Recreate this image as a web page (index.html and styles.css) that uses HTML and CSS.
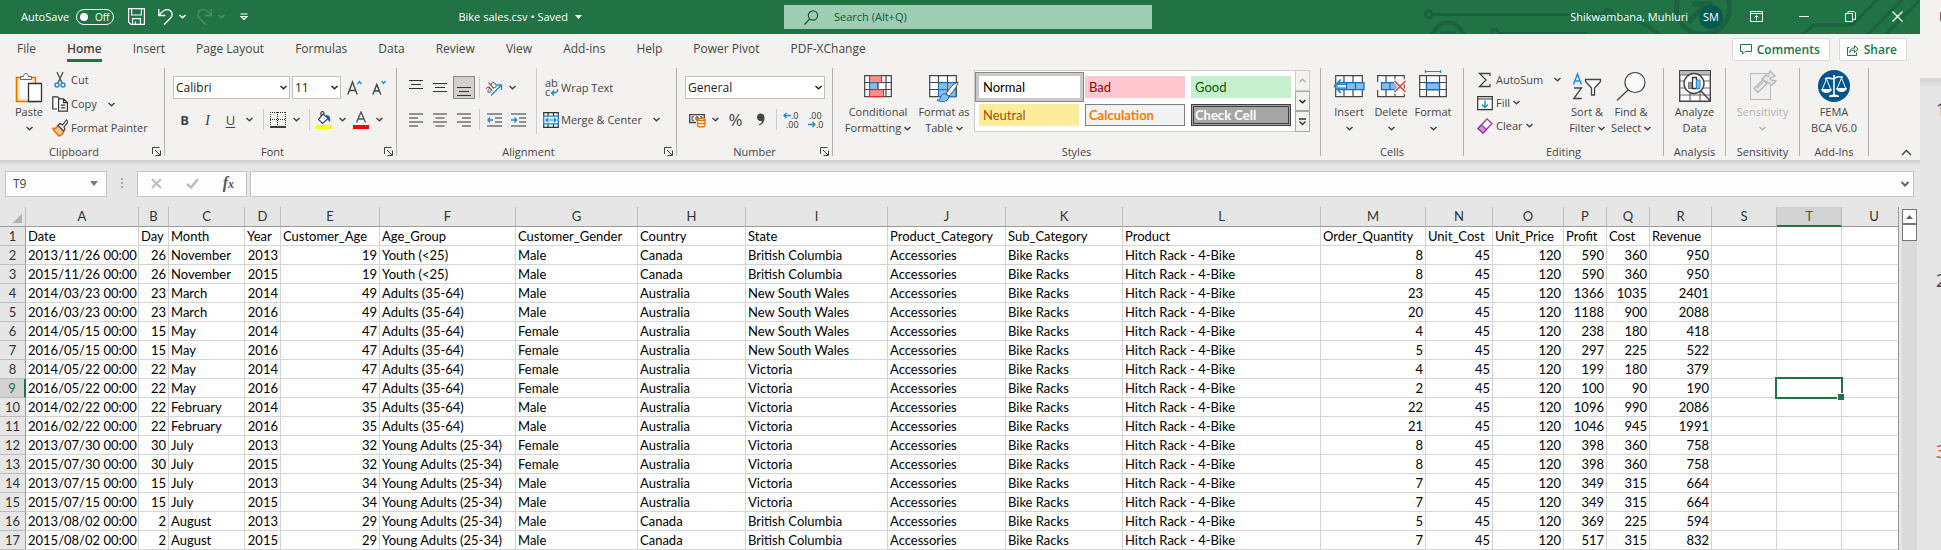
FILE: index.html
```html
<!DOCTYPE html>
<html lang="en">
<head>
<meta charset="utf-8">
<title>Bike sales.csv</title>
<link rel="stylesheet" href="styles.css">
</head>
<body>
<svg class="defs" aria-hidden="true">
  <symbol id="chev" viewBox="0 0 7 5"><path d="M.5 1 3.500 3.700 6.500 1" fill="none" stroke="currentColor" stroke-width="1.500"/></symbol>
  <symbol id="launch" viewBox="0 0 9 9"><path d="M.5 7V.5H7.500M3 3l5 5M8.500 3.500v5h-5" fill="none" stroke="#444"/></symbol>
</svg>
<div class="desktop">
<main class="window">
  <header class="titlebar">
    <svg class="circuit" width="500" height="34" viewBox="0 0 500 34" fill="none" stroke="#1c6140" stroke-width="3" aria-hidden="true">
      <circle cx="9" cy="14.500" r="3.500"/><path d="M13 14.500H182l6 0"/><circle cx="28" cy="38" r="15.500" stroke-width="4"/><path d="M20 33h16"/>
      <circle cx="75" cy="33" r="3.500"/><path d="M79 33.500h88"/><circle cx="188" cy="13" r="3.500"/><path d="M192 15l26 5 22 15"/>
      <circle cx="283" cy="8" r="26.500" stroke-width="5"/><path d="M268 22l20-20M272 4h18v18" stroke-width="5"/>
      <path d="M381 35l13-10h38l26-26M447 35l37-37M465 35l37-37"/>
    </svg>
    <div class="tb-left">
      <label class="autosave"><span>AutoSave</span><button class="toggle" type="button" aria-label="AutoSave off"><i></i>Off</button></label>
      <div class="qat">
        <button type="button" aria-label="Save"><svg width="17" height="17" viewBox="0 0 17 17" fill="none" stroke="#fff" stroke-width="1.200"><path d="M.6.6h15.800v15.800H3L.6 14zM3.600.6v6.400h9.800V.6M4.600 16v-5.400h7.800V16M7.500 16v-2.500"/></svg></button>
        <button type="button" aria-label="Undo"><svg width="15" height="18" viewBox="0 0 15 18" fill="none" stroke="#fff" stroke-width="1.300"><path d="M.8 1v6.500h6.500M1 7.300C4 3.500 7 1.200 10 1.600c4 .6 5.400 5.400 2.600 8.400L6 16.800"/></svg></button>
        <button type="button" aria-label="Undo list"><svg width="7" height="5"><use href="#chev"/></svg></button>
        <button type="button" class="dim" aria-label="Redo"><svg width="15" height="18" viewBox="0 0 15 18" fill="none" stroke="currentColor" stroke-width="1.300"><path d="M14.200 1v6.500H7.700M14 7.300C11 3.500 8 1.200 5 1.600 1 2.200-.4 7 2.400 10L9 16.800"/></svg></button>
        <button type="button" class="dim" aria-label="Redo list"><svg width="7" height="5"><use href="#chev"/></svg></button>
        <button type="button" class="custom" aria-label="Customize toolbar"><svg width="8" height="8" viewBox="0 0 8 8" fill="none" stroke="#fff" stroke-width="1.200"><path d="M.5 1h7M1 3.500h6L4 6.500z"/></svg></button>
      </div>
      <div class="doc">Bike sales.csv • Saved <svg width="7" height="4"><path d="M0 0h7L3.500 4z" fill="#fff"/></svg></div>
    </div>
    <label class="search"><svg width="15" height="15" viewBox="0 0 15 15" fill="none" stroke="#0e5c2f" stroke-width="1.200"><circle cx="9" cy="5.500" r="4.600"/><path d="M5.600 9 .5 14.500"/></svg><input type="text" placeholder="Search (Alt+Q)" aria-label="Search"></label>
    <div class="tb-right">
      <span class="user">Shikwambana, Muhluri</span><span class="avatar">SM</span>
      <button type="button" aria-label="Ribbon display"><svg width="13" height="11" viewBox="0 0 13 11" fill="none" stroke="#fff"><path d="M.5.5h12v10H.5zM.5 2.500h12M6.500 9V4.500M4.500 6.500l2-2 2 2"/></svg></button>
      <button type="button" aria-label="Minimize"><svg width="10" height="11"><path d="M0 5.500h10" stroke="#fff"/></svg></button>
      <button type="button" aria-label="Restore"><svg width="11" height="11" viewBox="0 0 11 11" fill="none" stroke="#fff"><path d="M.5 2.500h7v8h-7zM3 2.500V.5h6l1.500 1.500v6.500h-3"/></svg></button>
      <button type="button" aria-label="Close"><svg width="11" height="11"><path d="M.5.5l10 10M10.500.5l-10 10" stroke="#fff" stroke-width="1.200"/></svg></button>
    </div>
  </header>

  <nav class="tabs">
    <a href="#file">File</a><a href="#home" class="on">Home</a><a href="#insert">Insert</a><a href="#layout">Page Layout</a><a href="#formulas">Formulas</a><a href="#data">Data</a><a href="#review">Review</a><a href="#view">View</a><a href="#addins">Add-ins</a><a href="#help">Help</a><a href="#pivot">Power Pivot</a><a href="#pdf">PDF-XChange</a>
    <div class="actions">
      <button type="button"><svg width="12" height="11" viewBox="0 0 12 11" fill="none" stroke="#217346"><path d="M.5.5h11v7H5l-2.500 2.500V7.500h-2z"/></svg>Comments</button>
      <button type="button"><svg width="12" height="12" viewBox="0 0 12 12" fill="none" stroke="#217346"><path d="M2.500 3.500h-2v8h9v-3M2.500 8.500c.5-3 2-4.500 5-4.500V1.500L11 5 7.500 8.500V6c-2.500 0-4 1-5 2.500z"/></svg>Share</button>
    </div>
  </nav>

  <div class="ribbon">
    <section class="group g-clip">
      <div class="body">
        <button class="big" type="button"><svg width="28" height="34" viewBox="0 0 28 34"><path d="M1.500 7.500h19v24h-19z" fill="#fbe3a8" stroke="#e07000" stroke-width="1.500"/><path d="M4.500 9h13v20h-13z" fill="#fafafa"/><path d="M5.500 9.500V6.500h3c0-4 5-4 5 0h3v3z" fill="#fff" stroke="#666"/><path d="M13.500 13.500h13v18h-13z" fill="#fff" stroke="#333" stroke-width="1.300"/></svg><span>Paste</span><svg class="cv" width="7" height="5"><use href="#chev"/></svg></button>
        <div class="rows">
          <button type="button"><svg width="16" height="18" viewBox="0 0 16 18" fill="none"><path d="M5 1l5 11M11 1L6 12" stroke="#555" stroke-width="1.400"/><circle cx="5" cy="14" r="2" stroke="#1e88d0" stroke-width="1.400"/><circle cx="11" cy="14" r="2" stroke="#1e88d0" stroke-width="1.400"/></svg>Cut</button>
          <button type="button"><svg width="16" height="18" viewBox="0 0 16 18" fill="#fff" stroke="#333" stroke-width="1.200"><path d="M5 14H.8V1.800h4.700L8 4"/><path d="M6.600 3.800h5l3.800 3.700v8.700H6.600zM11.500 4v3.600h3.800M8.800 10.200h4.500M8.800 12.800h4.500"/></svg>Copy<svg class="cv far" width="7" height="5"><use href="#chev"/></svg></button>
          <button type="button"><svg width="16" height="18" viewBox="0 0 16 18"><path d="M1 9.500c3 .5 4-1 5-3l6 5.500c-1 3-3 4.500-5 5C5 15 2 12.500 1 9.500z" fill="#f9c38c" stroke="#e07000" stroke-width="1.500"/><path d="M6 6.500l2-2 2.500 1.500L14.500 1l1.500 2-4 5 1 2-1.500 2z" fill="#eee" stroke="#444" stroke-width="1.200"/></svg>Format Painter</button>
        </div>
      </div>
      <h2>Clipboard</h2><button class="launch" type="button" aria-label="Clipboard settings"><svg width="9" height="9"><use href="#launch"/></svg></button>
    </section>

    <section class="group g-font">
      <div class="body two">
        <div class="row">
          <span class="sel s-font"><select aria-label="Font"><option>Calibri</option></select><svg width="7" height="5"><use href="#chev"/></svg></span>
          <span class="sel s-size"><select aria-label="Font size"><option>11</option></select><svg width="7" height="5"><use href="#chev"/></svg></span>
          <button class="ic" type="button" aria-label="Increase font size"><svg width="16" height="18" viewBox="0 0 16 18" fill="none"><path d="M.8 15.500L5.500 3l4.700 12.500M2.300 11.500h6.400" stroke="#444" stroke-width="1.400"/><path d="M10.500 5l2-2.500 2 2.500" stroke="#1e88d0" stroke-width="1.300"/></svg></button>
          <button class="ic" type="button" aria-label="Decrease font size"><svg width="16" height="18" viewBox="0 0 16 18" fill="none"><path d="M1.800 15.500L5.800 5.500l4 10M3.300 12h5" stroke="#444" stroke-width="1.400"/><path d="M10.500 2l2 2.500 2-2.500" stroke="#1e88d0" stroke-width="1.300"/></svg></button>
        </div>
        <div class="row tight">
          <button class="ic ltr b" type="button">B</button><button class="ic ltr i" type="button">I</button><button class="ic ltr u" type="button">U</button><button class="dd" type="button" aria-label="Underline styles"><svg width="7" height="5"><use href="#chev"/></svg></button>
          <i class="sep"></i>
          <button class="ic" type="button" aria-label="Borders"><svg width="16" height="16" viewBox="0 0 16 16" fill="none" stroke="#333"><path d="M.5 0v14M15.500 0v14M7.500 0v14M0 .5h16M0 7.500h16" stroke-dasharray="1 1"/><path d="M0 15h16" stroke="#000" stroke-width="1.500"/></svg></button><button class="dd" type="button" aria-label="Border styles"><svg width="7" height="5"><use href="#chev"/></svg></button>
          <i class="sep"></i>
          <button class="ic" type="button" aria-label="Fill color"><svg width="16" height="18" viewBox="0 0 16 18"><path d="M7 3l5 4.500-5.500 5L2.500 8.500zM5 5V1.500c1-1.500 3-1 3 .5v2" fill="#fff" stroke="#444" stroke-width="1.200"/><path d="M10 4c4 0 5 3 4 7-2-1-2-3-4-5z" fill="#1f5fa8"/><path d="M0 14h16v4H0z" fill="#ff0"/></svg></button><button class="dd" type="button" aria-label="Fill colors"><svg width="7" height="5"><use href="#chev"/></svg></button>
          <button class="ic" type="button" aria-label="Font color"><svg width="16" height="18" viewBox="0 0 16 18"><path d="M3.500 11.500L8 1l4.500 10.500M5 8h6" fill="none" stroke="#555" stroke-width="1.400"/><path d="M0 14h16v4H0z" fill="#f00"/></svg></button><button class="dd" type="button" aria-label="Font colors"><svg width="7" height="5"><use href="#chev"/></svg></button>
        </div>
      </div>
      <h2>Font</h2><button class="launch" type="button" aria-label="Font settings"><svg width="9" height="9"><use href="#launch"/></svg></button>
    </section>

    <section class="group g-align">
      <div class="body">
        <div class="two">
          <div class="row">
            <button class="ic" type="button" aria-label="Top align"><svg width="14" height="18"><path d="M0 1.500h14M2 5.500h10M0 9.500h14" stroke="#333" stroke-width="1.200"/></svg></button>
            <button class="ic" type="button" aria-label="Middle align"><svg width="14" height="18"><path d="M0 4.500h14M2 8.500h10M0 12.500h14" stroke="#333" stroke-width="1.200"/></svg></button>
            <button class="ic act" type="button" aria-label="Bottom align"><svg width="14" height="18"><path d="M0 8.500h14M2 12.500h10M0 16.500h14" stroke="#333" stroke-width="1.200"/></svg></button>
            <i class="sep"></i>
            <button class="ic" type="button" aria-label="Orientation"><svg class="spill" width="18" height="18" viewBox="0 0 18 18"><text x="2" y="13" font-size="11" fill="#444" transform="rotate(-42 5 12)">ab</text><path d="M6 16.500L16 6.500M11.500 6h5v5" fill="none" stroke="#1e88d0" stroke-width="1.300"/></svg></button><button class="dd" type="button" aria-label="Orientations"><svg width="7" height="5"><use href="#chev"/></svg></button>
          </div>
          <div class="row">
            <button class="ic" type="button" aria-label="Align left"><svg width="14" height="14"><path d="M0 1h14M0 5h9M0 9h14M0 13h9" stroke="#333" stroke-width="1.200"/></svg></button>
            <button class="ic" type="button" aria-label="Center"><svg width="14" height="14"><path d="M0 1h14M2.500 5h9M0 9h14M2.500 13h9" stroke="#333" stroke-width="1.200"/></svg></button>
            <button class="ic" type="button" aria-label="Align right"><svg width="14" height="14"><path d="M0 1h14M5 5h9M0 9h14M5 13h9" stroke="#333" stroke-width="1.200"/></svg></button>
            <i class="sep"></i>
            <button class="ic" type="button" aria-label="Decrease indent"><svg width="15" height="14" fill="none"><path d="M0 1h15M8 5h7M8 9h7M0 13h15" stroke="#333" stroke-width="1.200"/><path d="M6 7H.8M3 4.500L.8 7 3 9.500" stroke="#1e88d0" stroke-width="1.300"/></svg></button>
            <button class="ic" type="button" aria-label="Increase indent"><svg width="15" height="14" fill="none"><path d="M0 1h15M8 5h7M8 9h7M0 13h15" stroke="#333" stroke-width="1.200"/><path d="M0 7h5.500M3.500 4.500L5.700 7 3.500 9.500" stroke="#1e88d0" stroke-width="1.300"/></svg></button>
          </div>
        </div>
        <div class="two wrapcol">
          <div class="row"><button class="txt" type="button"><svg class="spill" width="16" height="18" viewBox="0 0 16 18"><text x="2" y="8" font-size="11" fill="#444">ab</text><text x="2" y="17" font-size="11" fill="#444">c</text><path d="M14.500 10c1 3-1.500 4-5.500 4M11 11.500L8.500 14l2.500 2.500" fill="none" stroke="#1e88d0" stroke-width="1.400"/></svg>Wrap Text</button></div>
          <div class="row"><button class="txt" type="button"><svg width="16" height="16" viewBox="0 0 16 16" fill="none"><path d="M.7.7h14.600v14.600H.7zM5 1v3M10.500 1v3M5 12v3M10.500 12v3" stroke="#333" stroke-width="1.200"/><path d="M.7 4.200h14.600v7.600H.7z" fill="#e5f2fc" stroke="#1e88d0" stroke-width="1.300"/><path d="M3 8h10M5 6L3 8l2 2M11 6l2 2-2 2" stroke="#1e88d0" stroke-width="1.200"/></svg>Merge &amp; Center<svg class="cv" width="7" height="5"><use href="#chev"/></svg></button></div>
        </div>
      </div>
      <h2>Alignment</h2><button class="launch" type="button" aria-label="Alignment settings"><svg width="9" height="9"><use href="#launch"/></svg></button>
    </section>

    <section class="group g-num">
      <div class="body two">
        <div class="row"><span class="sel s-num"><select aria-label="Number format"><option>General</option></select><svg width="7" height="5"><use href="#chev"/></svg></span></div>
        <div class="row">
          <button class="ic" type="button" aria-label="Accounting format"><svg width="17" height="16" viewBox="0 0 17 16" fill="none"><path d="M7 10.500H.7V2.700h14.600V6" stroke="#444" stroke-width="1.300"/><path d="M5 4.800H3v3.500h2M9 8H7V4.800h2zM11 4.800h2V6" stroke="#444"/><path d="M8.500 7.500c0-1.500 7.500-1.500 7.500 0v6c0 1.800-7.500 1.800-7.500 0zM8.500 7.500c0 1.500 7.500 1.500 7.500 0M8.500 10.500c0 1.500 7.500 1.500 7.500 0" fill="#fff" stroke="#e07000" stroke-width="1.300"/></svg></button><button class="dd" type="button" aria-label="Accounting formats"><svg width="7" height="5"><use href="#chev"/></svg></button>
          <button class="ic pct" type="button">%</button>
          <button class="ic" type="button" aria-label="Comma style"><svg width="10" height="16" viewBox="0 0 10 16"><path d="M4.500 1.500c3 0 4 2 4 4.500 0 4-2 6.500-5.500 7.500v-1.200c2-.8 3-2 3-3.600C3 9.500 1 8 1 5.200c0-2 1.500-3.700 3.500-3.700z" fill="#444"/></svg></button>
          <i class="sep"></i>
          <button class="ic" type="button" aria-label="Increase decimal"><svg class="spill" width="17" height="18" viewBox="0 0 17 18"><text x="8" y="8" font-size="9" fill="#333">.0</text><text x="3" y="17" font-size="9" fill="#333">.00</text><path d="M8 4.500H1M3.500 2L1 4.500 3.500 7" fill="none" stroke="#1e88d0" stroke-width="1.300"/></svg></button>
          <button class="ic" type="button" aria-label="Decrease decimal"><svg class="spill" width="17" height="18" viewBox="0 0 17 18"><text x="2" y="8" font-size="9" fill="#333">.00</text><text x="9" y="17" font-size="9" fill="#333">.0</text><path d="M1 13.500h7M5.500 11L8 13.500 5.500 16" fill="none" stroke="#1e88d0" stroke-width="1.300"/></svg></button>
        </div>
      </div>
      <h2>Number</h2><button class="launch" type="button" aria-label="Number settings"><svg width="9" height="9"><use href="#launch"/></svg></button>
    </section>

    <section class="group g-styles">
      <div class="body">
        <button class="big w66" type="button"><svg width="28" height="34" viewBox="0 0 28 34" fill="none"><path d="M.7 5.700h26.600v21H.7zM6 5v22M22 5v22M0 12.500h28M0 19.500h28M14 5v22" fill="#fff" stroke="#444" stroke-width="1.200"/><path d="M5.600 5.700h12v7h-12z" fill="#ff8f8f" stroke="#d22"/><path d="M5.600 12.700h8v7h-8z" fill="#84bdec" stroke="#1469b8"/><path d="M5.600 19.700h14v7h-14z" fill="#ff8f8f" stroke="#d22"/></svg><span>Conditional</span><span>Formatting <svg width="7" height="5"><use href="#chev"/></svg></span></button>
        <button class="big w66" type="button"><svg width="30" height="34" viewBox="0 0 30 34" fill="none"><path d="M.7 5.700h26.600v21H.7zM9.500 5v22M18.500 5v22M0 12.500h28M0 19.500h28" fill="#fff" stroke="#444" stroke-width="1.200"/><path d="M9.500 12.700h17.500v14H9.500zM18.500 12v15M9 19.700h18" fill="#84bdec" stroke="#1469b8"/><path d="M29 12c-5 2-9 7-12 12l3 2c4-4 8-9 9-14z" fill="#fff" stroke="#444"/><path d="M17 24c-4-1-5 2-5.500 4-1 2-2.500 2-3.500 2 4 3 12 2 12-4z" fill="#84bdec" stroke="#1469b8"/></svg><span>Format as</span><span>Table <svg width="7" height="5"><use href="#chev"/></svg></span></button>
        <div class="gallery">
          <div class="swatches">
            <button type="button" class="sw normal">Normal</button><button type="button" class="sw bad">Bad</button><button type="button" class="sw good">Good</button>
            <button type="button" class="sw neutral">Neutral</button><button type="button" class="sw calc">Calculation</button><button type="button" class="sw check">Check Cell</button>
          </div>
          <div class="gscroll">
            <button type="button" class="off" aria-label="Scroll up"><svg width="7" height="5" class="flip"><use href="#chev"/></svg></button>
            <button type="button" aria-label="Scroll down"><svg width="7" height="5"><use href="#chev"/></svg></button>
            <button type="button" aria-label="More styles"><svg width="7" height="8" viewBox="0 0 7 8" fill="none" stroke="#333" stroke-width="1.300"><path d="M0 1h7M.5 3.500l3 3 3-3"/></svg></button>
          </div>
        </div>
      </div>
      <h2>Styles</h2>
    </section>

    <section class="group g-cells">
      <div class="body">
        <button class="big w42" type="button"><svg width="34" height="34" viewBox="0 0 34 34" fill="none"><path d="M3.700 5.700h26.600v21H3.700zM12 5v22M21 5v22" fill="#fff" stroke="#444" stroke-width="1.200"/><path d="M7 12.700h25v7H7zM14.500 13v7M23.500 13v7" fill="#84bdec" stroke="#1469b8" stroke-width="1.200"/><path d="M14 14.500H5l4-5M14 18H5l4 5M2 16.200L8.500 9.500M2 16.200L8.500 23M2 16.200h12" stroke="#1e88d0" stroke-width="1.200"/><path d="M6 16.200h8" stroke="#fff" stroke-width="2"/></svg><span>Insert</span><svg class="cv" width="7" height="5"><use href="#chev"/></svg></button>
        <button class="big w42" type="button"><svg width="34" height="34" viewBox="0 0 34 34" fill="none"><path d="M3.700 5.700h26.600v21H3.700zM12 5v22M21 5v22" fill="#fff" stroke="#444" stroke-width="1.200"/><path d="M1 12h22v8H1z" fill="#f3f2f1"/><path d="M7.500 12.700h13l4 3.500-4 3.500h-13zM16 13v7" fill="#84bdec" stroke="#1469b8" stroke-width="1.200"/><path d="M20 10l12 13M32 10L20 23" stroke="#f3f2f1" stroke-width="4"/><path d="M20.500 11l11 11M31.500 11l-11 11" stroke="#e33" stroke-width="1.300"/></svg><span>Delete</span><svg class="cv" width="7" height="5"><use href="#chev"/></svg></button>
        <button class="big w42" type="button"><svg width="34" height="34" viewBox="0 0 34 34" fill="none"><path d="M3.700 5.700h26.600v21H3.700zM10.500 5v22M23.500 5v22M3 12.500h28M3 19.500h28" fill="#fff" stroke="#444" stroke-width="1.200"/><path d="M10.500 12.700h13v7h-13z" fill="#84bdec" stroke="#1469b8" stroke-width="1.400"/><path d="M9.500 1.500h15M9.500 0v3M24.500 0v3" stroke="#1e88d0" stroke-width="1.200"/></svg><span>Format</span><svg class="cv" width="7" height="5"><use href="#chev"/></svg></button>
      </div>
      <h2>Cells</h2>
    </section>

    <section class="group g-edit">
      <div class="body">
        <div class="rows">
          <button type="button"><svg width="16" height="16" viewBox="0 0 16 16" fill="none" stroke="#444" stroke-width="1.300"><path d="M13 4V1.500H2.500L9 8l-6.500 6.500H13V12"/></svg>AutoSum<svg class="cv far" width="7" height="5"><use href="#chev"/></svg></button>
          <button type="button"><svg width="16" height="16" viewBox="0 0 16 16" fill="none"><path d="M.7 1.700h14.600v13H.7zM.7 4h14.600" fill="#fff" stroke="#333" stroke-width="1.200"/><path d="M8 5.500v7M5 9.500l3 3 3-3" stroke="#1e88d0" stroke-width="1.400"/></svg>Fill<svg class="cv" width="7" height="5"><use href="#chev"/></svg></button>
          <button type="button"><svg width="16" height="16" viewBox="0 0 16 16"><path d="M10 1l5 4.500-9 9.500L1 10.500z" fill="#fff" stroke="#993bab" stroke-width="1.300"/><path d="M4.500 7l5 4.500L6 15 1 10.500z" fill="#d592d8" stroke="#993bab" stroke-width="1.300"/></svg>Clear<svg class="cv" width="7" height="5"><use href="#chev"/></svg></button>
        </div>
        <button class="big w44" type="button"><svg width="30" height="34" viewBox="0 0 30 34" fill="none"><path d="M1.500 14.500L5.500 4l4 10.500M3 11h5" stroke="#1e88d0" stroke-width="1.400"/><path d="M2 18h7.500L1.800 28.500h8" stroke="#444" stroke-width="1.300"/><path d="M13.500 9.500h15v2l-6 6.500v7h-3v-7l-6-6.500z" fill="#fff" stroke="#444" stroke-width="1.300"/></svg><span>Sort &amp;</span><span>Filter <svg width="7" height="5"><use href="#chev"/></svg></span></button>
        <button class="big w44" type="button"><svg width="30" height="34" viewBox="0 0 30 34" fill="none"><circle cx="19" cy="12.500" r="10" fill="#fafafa" stroke="#444" stroke-width="1.200"/><path d="M12 20L1 30.500" stroke="#444" stroke-width="1.300"/></svg><span>Find &amp;</span><span>Select <svg width="7" height="5"><use href="#chev"/></svg></span></button>
      </div>
      <h2>Editing</h2>
    </section>

    <section class="group g-one">
      <div class="body"><button class="big" type="button"><svg width="32" height="34" viewBox="0 0 32 34" fill="none"><path d="M.7.7h30.600v30.600H.7z" fill="#fff" stroke="#444" stroke-width="1.400"/><path d="M1 1h30v4H1z" fill="#bbb"/><path d="M1 5h30M1 11h30M1 18h30M1 25h30M11 18v13M21 18v13" stroke="#666" stroke-width="1.200"/><circle cx="15" cy="13.500" r="10" fill="#fff" stroke="#444" stroke-width="1.400"/><path d="M22 21l9 9.500" stroke="#444" stroke-width="1.500"/><path d="M9.500 12.500h3.500v6H9.500z" fill="#999" stroke="#777"/><path d="M13.500 7.500h4v11h-4z" fill="#fff" stroke="#333" stroke-width="1.300"/><path d="M17.500 10h3.500v8.500h-3.500z" fill="#84bdec" stroke="#1e88d0"/></svg><span>Analyze</span><span>Data</span></button></div>
      <h2>Analysis</h2>
    </section>
    <section class="group g-sens">
      <div class="body"><button class="big off" type="button" disabled><svg width="28" height="34" viewBox="0 0 28 34" fill="#e8e8e8" stroke="#b8b8b8"><path d="M1.500 3.500h20v26h-20z" fill="#f0f0f0"/><path d="M5 18.500l9-9 4 4-9 9zM8 18l6-6" stroke-width="1.300"/><path d="M13 9l4-4 2 1 2-5 5 5-5 2 1 2 5 1-4 4z" stroke-width="1.400"/></svg><span>Sensitivity</span><svg class="cv" width="7" height="5"><use href="#chev"/></svg></button></div>
      <h2>Sensitivity</h2>
    </section>
    <section class="group g-add">
      <div class="body"><button class="big" type="button"><svg width="32" height="34" viewBox="0 0 32 34" fill="none" stroke="#fff"><circle cx="16" cy="16" r="16" fill="#00558c" stroke="none"/><path d="M16 5v20M7 9c4-3 6 1 9-.5s5-3 9-1" stroke-width="1.600"/><path d="M11 26.500c1-2 9-2 10 0z" fill="#fff"/><path d="M8.500 9L4 20M8.500 9l4.500 11M23.500 8L19 19M23.500 8L28 19"/><path d="M3.500 19.500h10c-1 4-9 4-10 0zM18.500 18.500h10c-1 4-9 4-10 0z" fill="#fff"/></svg><span>FEMA</span><span>BCA V6.0</span></button></div>
      <h2>Add-Ins</h2>
    </section>
    <button class="collapse" type="button" aria-label="Collapse ribbon"><svg width="11" height="7"><path d="M1 6l4.500-4.500L10 6" fill="none" stroke="#444" stroke-width="1.400"/></svg></button>
  </div>

  <div class="fbar">
    <label class="namebox"><input type="text" value="T9" aria-label="Name box"><svg width="8" height="5"><path d="M0 0h8L4 5z" fill="#777"/></svg></label>
    <span class="grip"></span>
    <div class="fx">
      <button type="button" aria-label="Cancel"><svg width="11" height="11"><path d="M1 1l9 9M10 1l-9 9" stroke="#bbb" stroke-width="2"/></svg></button>
      <button type="button" aria-label="Enter"><svg width="13" height="11" fill="none"><path d="M1 6l4 3.500L12 1" stroke="#bbb" stroke-width="2.400"/></svg></button>
      <button type="button" class="fn">f<sub>x</sub></button>
    </div>
    <label class="formula"><input type="text" aria-label="Formula"><svg width="8" height="6" viewBox="0 0 8 6"><path d="M.5 1L4 4.500 7.500 1" fill="none" stroke="#666" stroke-width="2"/></svg></label>
  </div>

  <div class="sheet">
    <div class="viewport"><table class="grid" id="grid"></table></div>
    <div class="scroll"><button type="button" aria-label="Scroll up"><svg width="7" height="4"><path d="M0 4h7L3.500 0z" fill="#666"/></svg></button><span class="thumb"></span></div>
  </div>
</main>
<aside class="behind">
  <div class="b-top"><span>I</span></div>
  <ol><li>1</li><li>2</li><li class="cur">3</li></ol>
</aside>
</div>
<script src="app.js"></script>
</body>
</html>
```
FILE: styles.css
```css
* { box-sizing: border-box; }
body { margin: 0; overflow: hidden; background: #e6e6e6; font: 12px/16px "Open Sans", "Noto Sans", sans-serif; color: #444; }
button, input, select { font: inherit; color: inherit; margin: 0; padding: 0; border: 0; background: none; }
button { white-space: nowrap; }
input { min-width: 0; outline: 0; }
svg { flex: none; }
.spill { overflow: visible; }
.defs { display: none; }
.desktop { display: flex; height: 100vh; overflow: hidden; }
.window { flex: 1; min-width: 0; display: flex; flex-direction: column; }

/* title bar */
.titlebar { position: relative; display: grid; grid-template-columns: 784fr 368fr 768fr; align-items: center; height: 34px; background: #217346; color: #fff; overflow: hidden; font-size: 11px; }
.circuit { position: absolute; right: 0; top: 0; }
.tb-left { display: flex; align-items: center; padding: 0 202px 1px 21px; }
.autosave { display: flex; align-items: center; gap: 7px; }
.toggle { display: flex; align-items: center; gap: 7px; width: 38px; height: 16px; padding: 0 3px; border: 1px solid #fff; border-radius: 8px; font-size: 10px; }
.toggle i { width: 8px; height: 8px; border-radius: 50%; background: #fff; }
.qat { display: flex; align-items: center; gap: 6px; margin-left: 14px; }
.qat button { display: flex; }
.qat button:nth-child(2) { margin-left: 7px; }
.qat .dim { color: #4d9169; }
.qat .dim:nth-child(4) { margin-left: 5px; }
.qat .custom { margin-left: 9px; }
.doc { display: flex; align-items: center; gap: 7px; margin-left: auto; white-space: nowrap; }
.search { position: relative; display: flex; align-items: center; gap: 15px; height: 24px; padding-left: 20px; background: #9fcdb3; color: #0e5c2f; }
.search input { flex: 1; }
.search input::placeholder { color: #0e5c2f; opacity: 1; }
.tb-right { position: relative; display: flex; align-items: center; justify-content: flex-end; gap: 36px; padding-right: 17px; }
.tb-right button { display: flex; padding-bottom: 2px; }
.user { margin-right: -25px; }
.avatar { width: 24px; height: 24px; border-radius: 50%; background: #035b52; text-align: center; line-height: 24px; margin-right: -9px; }

/* tabs */
.tabs { display: flex; gap: 31px; height: 34px; padding: 5px 13px 0 17px; background: #f3f2f1; line-height: 20px; }
.tabs a { height: 23px; color: #444; text-decoration: none; white-space: nowrap; }
.tabs .on { font-weight: 600; border-bottom: 3px solid #217346; }
.actions { display: flex; gap: 9px; margin-left: auto; margin-top: -1px; height: 23px; }
.actions button { display: flex; align-items: center; gap: 5px; padding: 0 9px 0 7px; background: #fff; border: 1px solid #dcdad8; border-radius: 2px; color: #217346; font-weight: 600; }

/* ribbon */
.ribbon { position: relative; display: flex; height: 92px; padding-bottom: 4px; background: #f3f2f1; font-size: 11px; }
.group { position: relative; flex: none; display: flex; flex-direction: column; border-right: 1px solid #b3b1af; }
.group h2 { margin: 0; height: 12px; font: inherit; text-align: center; }
.g-clip h2, .g-align h2, .g-font h2 { padding-right: 16px; }
.body { flex: 1; display: flex; min-height: 0; }
.launch { position: absolute; right: 3px; bottom: 0; display: flex; }
.g-clip { width: 165px; } .g-font { width: 232px; } .g-align { width: 280px; } .g-num { width: 156px; } .g-styles { width: 488px; }
.g-cells { width: 143px; } .g-edit { width: 200px; } .g-one { width: 62px; } .g-sens { width: 74px; } .g-add { width: 69px; }
.g-clip .body { padding-left: 7px; gap: 1px; }
.g-font .body { padding-left: 8px; }
.g-align .body { padding-left: 7px; }
.g-num .body { padding-left: 8px; }
.g-styles .body { padding-left: 12px; }
.g-cells .body { padding-left: 7px; }
.g-edit .body { padding-left: 13px; }
.g-one .body, .g-sens .body, .g-add .body { justify-content: center; }

.big { display: flex; flex-direction: column; align-items: center; padding-top: 2px; min-width: 44px; line-height: 16px; }
.big span { height: 16px; }
.big span svg { vertical-align: 1px; }
.big .cv { margin-top: 6px; }
.big.w66 { width: 66px; } .big.w42 { min-width: 42px; } .big.w44 { width: 44px; }
.big.off { color: #b4b2b0; }
.rows { display: flex; flex-direction: column; }
.rows button { display: flex; align-items: center; gap: 3px; height: 24px; }
.g-edit .rows { width: 88px; }
.g-edit .rows button { height: 23px; }
.rows .far { margin-left: 8px; }
.two { display: flex; flex-direction: column; gap: 9px; padding-top: 8px; }
.row { display: flex; align-items: center; height: 23px; }
.ic { display: flex; align-items: center; justify-content: center; width: 24px; height: 23px; }
.ic.act { width: 22px; margin: 0 1px; background: #d2d0ce; border: 1px solid #8a8886; }
.dd { display: flex; justify-content: center; width: 13px; }
.sep { width: 1px; height: 21px; margin: 0 2px 0 3px; background: #cfcdcb; }
.g-font .sep { margin: 0 2px 0 6px; }
.ic.ltr { width: 23px; font-size: 13px; }
.ltr + .dd { width: 15px; }
.b { font-weight: 700; } .ic.i { font-family: "Liberation Serif", serif; font-style: italic; font-size: 15px; } .u { text-decoration: underline; text-underline-offset: 2px; }
.ic.pct { font-size: 17px; width: 27px; }
.sel { position: relative; display: flex; align-items: center; height: 23px; background: #fff; border: 1px solid #c3c1bf; color: #222; font-size: 12px; }
.sel select { appearance: none; width: 100%; height: 21px; padding-left: 2px; }
.sel svg { position: absolute; right: 2px; pointer-events: none; }
.s-font { width: 117px; } .s-size { width: 49px; margin: 0 2px 0 2px; } .s-num { width: 140px; }
.wrapcol { margin-left: 6px; padding-left: 6px; border-left: 1px solid #cfcdcb; height: 66px; }
.txt { display: flex; align-items: center; gap: 2px; }
.txt .cv { margin-left: 9px; }

.gallery { display: flex; height: 62px; margin: 2px 0 0 -3px; }
.swatches { display: grid; grid-template-columns: repeat(3, 100px); grid-auto-rows: 22px; gap: 6px; width: 321px; padding: 5px 0 0 4px; background: #fff; border: 1px solid #cfcdcb; border-right: 0; }
.sw { text-align: left; padding-left: 4px; font: 13px/20px Lato, sans-serif; }
.normal { color: #000; outline: 3px solid #cbc9c6; box-shadow: 0 0 0 4px #8a8886; margin-right: -1px; }
.bad { background: #ffc7ce; color: #9c0006; } .good { background: #c6efce; color: #006100; } .neutral { background: #ffeb9c; color: #9c5700; }
.calc { background: #f2f2f2; color: #fa7d00; border: 1px solid #7f7f7f; font-weight: 700; padding-left: 3px; }
.check { background: #a5a5a5; color: #fff; border: 3px double #3f3f3f; font-weight: 700; padding-left: 1px; line-height: 16px; }
.gscroll { display: flex; flex-direction: column; width: 15px; }
.gscroll button { flex: 1; display: flex; align-items: center; justify-content: center; border: 1px solid #aaa8a6; color: #222; }
.gscroll .off { color: #b0aeac; border-color: #cfcdcb; }
.flip { transform: rotate(180deg); }
.collapse { display: flex; align-self: flex-end; margin-left: auto; padding: 0 8px 0 0; }

/* formula bar */
.fbar { display: flex; align-items: center; height: 47px; padding: 0 6px 0 5px; background: linear-gradient(#cfcfcf, #e6e6e6 6px); }
.namebox, .fx, .formula { display: flex; align-items: center; height: 26px; background: #fdfdfd; border: 1px solid #c6c6c6; }
.namebox { width: 102px; padding: 0 8px 0 7px; }
.namebox input { flex: 1; }
.grip { width: 2px; height: 11px; margin: 0 14px 0 14px; background: repeating-linear-gradient(#aaa 0 2px, transparent 2px 4px); }
.fx { width: 110px; justify-content: space-between; padding: 0 12px 0 13px; }
.fx button { display: flex; align-items: center; }
.fx .fn { font: italic 700 16px/16px "Liberation Serif", serif; color: #555; align-items: baseline; }
.fn sub { font-size: 12px; vertical-align: baseline; }
.formula { flex: 1; margin-left: 3px; padding-right: 4px; }
.formula input { flex: 1; }

/* sheet */
.sheet { flex: 1; min-height: 0; display: flex; }
.viewport { flex: 1; min-width: 0; overflow: hidden; border-right: 1px solid #9b9b9b; }
.grid { width: 1px; table-layout: fixed; border-collapse: separate; border-spacing: 0; background: #fff; color: #000; font: 13px/18px Lato, sans-serif; }
.grid th, .grid td { height: 19px; padding: 0 2px; border: solid #d4d4d4; border-width: 0 1px 1px 0; white-space: nowrap; overflow: hidden; font-weight: 400; }
.grid td.n { text-align: right; }
.grid th { background: #e6e6e6; color: #333; text-align: center; border-color: #bdbdbd; }
.grid thead th { height: 20px; line-height: 19px; border-bottom-color: #9b9b9b; }
.grid tbody th { border-right-color: #9b9b9b; padding: 0; }
.grid thead th.cur { background: #d2d2d2; color: #217346; border-bottom: 2px solid #217346; line-height: 18px; }
.grid tbody th.cur { background: #d2d2d2; color: #217346; border-right: 2px solid #217346; }
.grid .corner { background: linear-gradient(135deg, #e6e6e6 0 55%, #b4b4b4 55%) no-repeat 11px 5px / 11px 11px, #e6e6e6; }
.grid td.sel-cell { position: relative; overflow: visible; }
.sel-cell::before { content: ""; position: absolute; inset: -2px; border: 2px solid #217346; }
.sel-cell::after { content: ""; position: absolute; right: -3px; bottom: -3px; width: 6px; height: 6px; background: #217346; border: solid #fff; border-width: 1px 0 0 1px; }
.scroll { display: flex; flex-direction: column; width: 15px; margin: 2px 3px 0; background: #dadada; }
.scroll button { display: flex; align-items: center; justify-content: center; height: 15px; background: #fff; border: 1px solid #777; }
.thumb { height: 17px; background: #fff; border: 1px solid #777; }

/* window behind */
.behind { width: 21px; overflow: hidden; background: linear-gradient(#d4d4d4, #e6e6e6 10px) 0 78px no-repeat, #e6e6e6; }
.b-top { height: 78px; padding: 9px 0 0 19px; background: #f3f2f1; }
.behind ol { margin: 0; padding: 18px 0 0 16px; list-style: none; font-size: 18px; line-height: 26px; }
.behind li { height: 171px; }
.behind .cur { color: #d24726; }
```
FILE: app.js
```js
const widths = [26, 113, 30, 76, 36, 99, 136, 122, 108, 142, 118, 117, 198, 105, 67, 71, 43, 43, 62, 65, 65, 65];
const letters = "ABCDEFGHIJKLMNOPQRSTU".split("");
const headings = ["Date", "Day", "Month", "Year", "Customer_Age", "Age_Group", "Customer_Gender", "Country", "State", "Product_Category", "Sub_Category", "Product", "Order_Quantity", "Unit_Cost", "Unit_Price", "Profit", "Cost", "Revenue"];
const numeric = new Set([0, 1, 3, 4, 12, 13, 14, 15, 16, 17]);
const youth = "Youth (<25)", adults = "Adults (35-64)", young = "Young Adults (25-34)";
const bc = "British Columbia", nsw = "New South Wales", vic = "Victoria";
// date, month, age, group, gender, country, state, quantity, profit, cost, revenue
const sales = [
  ["2013/11/26", "November", 19, youth, "Male", "Canada", bc, 8, 590, 360, 950],
  ["2015/11/26", "November", 19, youth, "Male", "Canada", bc, 8, 590, 360, 950],
  ["2014/03/23", "March", 49, adults, "Male", "Australia", nsw, 23, 1366, 1035, 2401],
  ["2016/03/23", "March", 49, adults, "Male", "Australia", nsw, 20, 1188, 900, 2088],
  ["2014/05/15", "May", 47, adults, "Female", "Australia", nsw, 4, 238, 180, 418],
  ["2016/05/15", "May", 47, adults, "Female", "Australia", nsw, 5, 297, 225, 522],
  ["2014/05/22", "May", 47, adults, "Female", "Australia", vic, 4, 199, 180, 379],
  ["2016/05/22", "May", 47, adults, "Female", "Australia", vic, 2, 100, 90, 190],
  ["2014/02/22", "February", 35, adults, "Male", "Australia", vic, 22, 1096, 990, 2086],
  ["2016/02/22", "February", 35, adults, "Male", "Australia", vic, 21, 1046, 945, 1991],
  ["2013/07/30", "July", 32, young, "Female", "Australia", vic, 8, 398, 360, 758],
  ["2015/07/30", "July", 32, young, "Female", "Australia", vic, 8, 398, 360, 758],
  ["2013/07/15", "July", 34, young, "Male", "Australia", vic, 7, 349, 315, 664],
  ["2015/07/15", "July", 34, young, "Male", "Australia", vic, 7, 349, 315, 664],
  ["2013/08/02", "August", 29, young, "Male", "Canada", bc, 5, 369, 225, 594],
  ["2015/08/02", "August", 29, young, "Male", "Canada", bc, 7, 517, 315, 832]
];
const rows = [headings].concat(sales.map(([date, month, age, group, gender, country, state, qty, profit, cost, revenue]) => [
  date + " 00:00", Number(date.slice(8)), month, date.slice(0, 4), age, group, gender, country, state,
  "Accessories", "Bike Racks", "Hitch Rack - 4-Bike", qty, 45, 120, profit, cost, revenue
]));

const table = document.getElementById("grid");
function add(parent, tag, className, text) {
  const el = document.createElement(tag);
  if (className) el.className = className;
  if (text !== undefined) el.textContent = text;
  parent.appendChild(el);
  return el;
}
const cols = add(table, "colgroup");
widths.forEach(w => { add(cols, "col").style.width = w + "px"; });
const head = add(add(table, "thead"), "tr");
add(head, "th", "corner");
letters.forEach(l => add(head, "th", l === "T" ? "cur" : "", l));
const body = add(table, "tbody");
rows.forEach((row, r) => {
  const tr = add(body, "tr");
  add(tr, "th", r === 8 ? "cur" : "", r + 1);
  letters.forEach((l, c) => {
    const cls = r === 8 && l === "T" ? "sel-cell" : r > 0 && numeric.has(c) ? "n" : "";
    add(tr, "td", cls, row[c]);
  });
});
```
